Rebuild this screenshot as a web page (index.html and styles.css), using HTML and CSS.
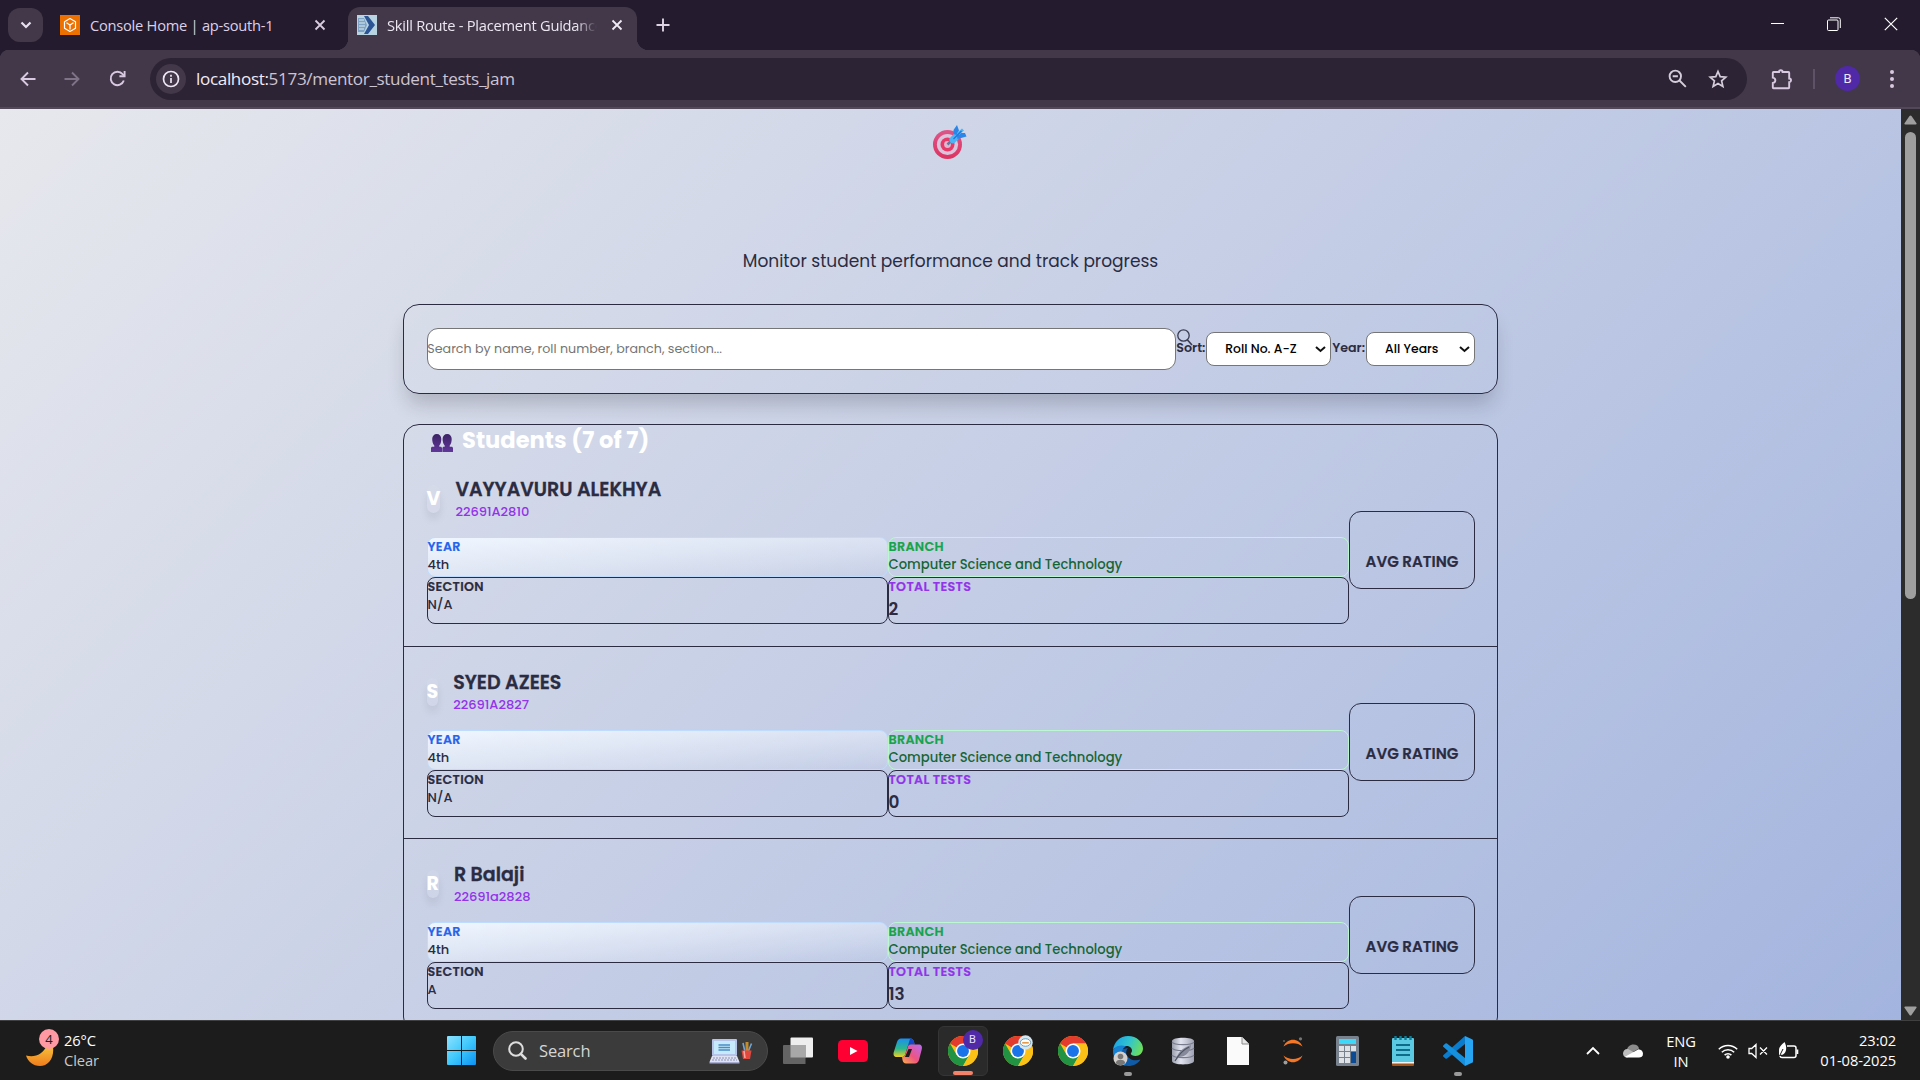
FILE: index.html
```html
<!DOCTYPE html>
<html lang="en">
<head>
<meta charset="utf-8">
<title>Skill Route - Placement Guidance</title>
<link rel="stylesheet" href="styles.css">
</head>
<body>
<svg class="defs" width="0" height="0" aria-hidden="true">
  <defs>
    <symbol id="chrome" viewBox="0 0 48 48">
      <circle cx="24" cy="24" r="24" fill="#fbc116"/>
      <path d="M24 24 3.2 12A24 24 0 0 1 44.8 12H24z" fill="#e33b2e"/>
      <path d="M3.2 12A24 24 0 0 0 24 48L34.4 30 24 24 13.6 30z" fill="#229342"/>
      <path d="M24 12H44.8A24 24 0 0 1 24 48L34.4 30z" fill="#fbc116"/>
      <circle cx="24" cy="24" r="12" fill="#fff"/>
      <circle cx="24" cy="24" r="9.5" fill="#1a73e8"/>
    </symbol>
  </defs>
</svg>

<div class="tabstrip">
  <div class="tab-search"><svg width="12" height="8" viewBox="0 0 12 8"><path d="M1.5 1.5 6 6l4.500-4.500" fill="none" stroke="#e8e0ee" stroke-width="2.200"/></svg></div>
  <div class="tab tab-idle">
    <svg width="20" height="20" viewBox="0 0 20 20"><rect width="20" height="20" fill="#ed7100"/><g fill="none" stroke="#fff" stroke-width="1.200" stroke-linejoin="round"><path d="M10 3.500 15.500 6.700V13.300L10 16.500 4.500 13.300V6.700z"/><path d="M6.500 7.700 10 10l3.500-2.300M10 10v4.500"/></g></svg>
    <span class="tab-title">Console Home | ap-south-1</span>
    <svg class="tab-x" width="12" height="12" viewBox="0 0 12 12"><path d="M1.500 1.500l9 9M10.500 1.500l-9 9" stroke="#d8cce0" stroke-width="1.800"/></svg>
  </div>
  <div class="tab tab-active">
    <svg width="20" height="20" viewBox="0 0 20 20"><rect width="20" height="20" fill="#b8d4e2"/><path d="M1 3h6l3 7-3 7H1z" fill="#7fa3c4"/><path d="M2 5h5M2 8h6M2 11h6M2 14h5" stroke="#dcebf2" stroke-width="1"/><path d="M7 1h4l7 9-7 9H7l5-9z" fill="#2c5596"/></svg>
    <span class="tab-title tab-fade">Skill Route - Placement Guidance</span>
    <svg class="tab-x" width="12" height="12" viewBox="0 0 12 12"><path d="M1.500 1.500l9 9M10.500 1.500l-9 9" stroke="#f0eaf4" stroke-width="1.800"/></svg>
  </div>
  <svg class="new-tab" width="14" height="14" viewBox="0 0 14 14"><path d="M7 .5v13M.5 7h13" stroke="#ddd3e4" stroke-width="1.900"/></svg>
  <div class="window-buttons">
    <svg width="13" height="14" viewBox="0 0 13 14"><path d="M0 6.500h13" stroke="#fff"/></svg>
    <svg width="14" height="14" viewBox="0 0 14 14" fill="none" stroke="#fff"><rect x=".5" y="3" width="10.500" height="10.500" rx="1"/><path d="M3 .8h8.500a1.800 1.800 0 0 1 1.800 1.800V11"/></svg>
    <svg width="14" height="14" viewBox="0 0 14 14"><path d="M.8.8l12.400 12.400M13.200.8.8 13.200" stroke="#fff" stroke-width="1.200"/></svg>
  </div>
</div>

<div class="toolbar">
  <svg class="nav-back" width="16" height="16" viewBox="0 0 16 16" fill="none" stroke="#d9c9e0" stroke-width="1.900"><path d="M15.500 8H2M8 1.500 1.500 8 8 14.500"/></svg>
  <svg class="nav-forward" width="16" height="16" viewBox="0 0 16 16" fill="none" stroke="#7f7388" stroke-width="1.900"><path d="M.5 8H14M8 1.500 14.500 8 8 14.500"/></svg>
  <svg class="nav-reload" width="17" height="17" viewBox="0 0 17 17" fill="none" stroke="#d9c9e0" stroke-width="1.900"><path d="M14.800 10.500a6.700 6.700 0 1 1-1.200-6.300L15 5.700"/><path d="M15.600 1v5.200h-5.200"/></svg>
  <div class="omnibox">
    <div class="site-info"><svg width="18" height="18" viewBox="0 0 18 18"><circle cx="9" cy="9" r="7.500" fill="none" stroke="#eee6f2" stroke-width="1.700"/><path d="M9 8v5M9 4.800v1.900" stroke="#eee6f2" stroke-width="1.700"/></svg></div>
    <span class="url"><b>localhost:</b>5173/mentor_student_tests_jam</span>
    <svg class="omni-zoom" width="19" height="19" viewBox="0 0 19 19" fill="none" stroke="#d6cdda" stroke-width="1.900"><circle cx="7.300" cy="7.300" r="5.700"/><path d="M11.500 11.500l6.300 6.300M4.700 7.300h5.200"/></svg>
    <svg class="omni-star" width="20" height="20" viewBox="0 0 20 20"><path d="M10 2.500l2.200 5.200 5.600.5-4.200 3.700 1.300 5.500L10 14.500l-4.900 2.900 1.300-5.500L2.200 8.200l5.600-.5z" fill="none" stroke="#d6cdda" stroke-width="1.700"/></svg>
  </div>
  <svg class="puzzle" width="22" height="22" viewBox="0 0 22 22"><path d="M2.500 4H8a1.800 1.800 0 0 1 3.600 0H17.500a.7.700 0 0 1 .7.700V10.500a1.800 1.800 0 0 1 0 3.600V19.500a.7.700 0 0 1-.7.700H2.500a.7.700 0 0 1-.7-.7V15c3.400-.6 3.400-4.800 0-5.400V4.700a.7.700 0 0 1 .7-.7z" fill="none" stroke="#d9c9e0" stroke-width="1.900"/></svg>
  <span class="toolbar-rule"></span>
  <span class="profile">B</span>
  <svg class="kebab" width="4" height="18" viewBox="0 0 4 18" fill="#d9c9e0"><circle cx="2" cy="2" r="2"/><circle cx="2" cy="9" r="2"/><circle cx="2" cy="16" r="2"/></svg>
</div>

<div class="viewport">
  <main class="page">
    <svg class="target" width="34" height="34" viewBox="0 0 34 34">
      <defs><linearGradient id="tg" x1="0" y1="0" x2="0" y2="1"><stop offset="0" stop-color="#dc5689"/><stop offset="1" stop-color="#de3360"/></linearGradient></defs>
      <circle cx="14.500" cy="19.500" r="14.500" fill="url(#tg)"/><circle cx="14.500" cy="19.500" r="10.600" fill="#d9c6dc"/><circle cx="14.500" cy="19.500" r="7" fill="#e83a69"/><circle cx="14.500" cy="19.500" r="3.400" fill="#dcb9d0"/>
      <path d="M14.500 19.500 19 15" stroke="#68779b" stroke-width="2.500"/>
      <path d="M16.500 13.500 23 6.500l5 5-6.500 6.500c-3 1.500-6-1.500-5-4.500z" fill="#4db3f5"/>
      <path d="M20.500 9 20.500 5 24 0 26 5.500 23.500 10zM24.500 14 33.500 11.500 32 8 27.500 8 24 11z" fill="#2c86e8"/>
      <path d="M25 9l5-4.500" stroke="#4db3f5" stroke-width="3"/><path d="M20.500 14l8-8" stroke="#2474d6" stroke-width="1.200"/>
    </svg>
    <p class="subtitle">Monitor student performance and track progress</p>

    <section class="filters">
      <input class="search" type="text" placeholder="Search by name, roll number, branch, section...">
      <label class="filter-label sort-label">Sort:
        <svg class="lens" width="16" height="17" viewBox="0 0 16 17" fill="none" stroke="#3b3c52" stroke-width="1.300"><circle cx="6.500" cy="6.500" r="5.700"/><path d="M10.300 10.800l4.700 5.200" stroke-width="1.700"/></svg>
      </label>
      <div class="select select-sort">Roll No. A-Z<svg width="11" height="7" viewBox="0 0 11 7"><path d="M1 1l4.500 4L10 1" fill="none" stroke="#111" stroke-width="2"/></svg></div>
      <label class="filter-label year-label">Year:</label>
      <div class="select select-year">All Years<svg width="11" height="7" viewBox="0 0 11 7"><path d="M1 1l4.500 4L10 1" fill="none" stroke="#111" stroke-width="2"/></svg></div>
    </section>

    <section class="students">
      <h2 class="students-title">
        <svg class="people" width="22" height="18" viewBox="0 0 22 18"><defs><linearGradient id="pg" x1="0" y1="0" x2="0" y2="1"><stop offset="0" stop-color="#3c2265"/><stop offset="1" stop-color="#60389a"/></linearGradient></defs><g fill="url(#pg)"><path d="M5.800 0C8.500 0 10.300 2 10.300 5c0 2.500-.6 5-2 6.500v1.300h1.200c.9 0 1.500.6 1.500 1.500V18H0v-3.700c0-.9.600-1.500 1.500-1.500h1.800v-1.300C1.900 10 1.200 7.500 1.200 5c0-3 1.900-5 4.600-5z"/><path d="M16.200 0c2.700 0 4.500 2 4.500 5 0 2.500-.6 5-2 6.500v1.300h1.800c.9 0 1.500.6 1.500 1.500V18H11.400v-3.700c0-.9.600-1.500 1.500-1.500h.8v-1.300c-1.400-1.500-2.100-4-2.100-6.500 0-3 1.900-5 4.600-5z"/></g></svg>
        Students (7 of 7)
      </h2>

      <article class="student">
        <div class="student-main">
          <header class="student-head"><span class="avatar">V</span><div><h3>VAYYAVURU ALEKHYA</h3><p class="roll">22691A2810</p></div></header>
          <dl class="facts">
            <div class="fact fact-year"><dt>YEAR</dt><dd>4th</dd></div>
            <div class="fact fact-branch"><dt>BRANCH</dt><dd>Computer Science and Technology</dd></div>
            <div class="fact"><dt>SECTION</dt><dd>N/A</dd></div>
            <div class="fact fact-tests"><dt>TOTAL TESTS</dt><dd>2</dd></div>
          </dl>
        </div>
        <div class="rating">AVG RATING</div>
      </article>

      <article class="student">
        <div class="student-main">
          <header class="student-head"><span class="avatar">S</span><div><h3>SYED AZEES</h3><p class="roll">22691A2827</p></div></header>
          <dl class="facts">
            <div class="fact fact-year"><dt>YEAR</dt><dd>4th</dd></div>
            <div class="fact fact-branch"><dt>BRANCH</dt><dd>Computer Science and Technology</dd></div>
            <div class="fact"><dt>SECTION</dt><dd>N/A</dd></div>
            <div class="fact fact-tests"><dt>TOTAL TESTS</dt><dd>0</dd></div>
          </dl>
        </div>
        <div class="rating">AVG RATING</div>
      </article>

      <article class="student">
        <div class="student-main">
          <header class="student-head"><span class="avatar">R</span><div><h3>R Balaji</h3><p class="roll">22691a2828</p></div></header>
          <dl class="facts">
            <div class="fact fact-year"><dt>YEAR</dt><dd>4th</dd></div>
            <div class="fact fact-branch"><dt>BRANCH</dt><dd>Computer Science and Technology</dd></div>
            <div class="fact"><dt>SECTION</dt><dd>A</dd></div>
            <div class="fact fact-tests"><dt>TOTAL TESTS</dt><dd>13</dd></div>
          </dl>
        </div>
        <div class="rating">AVG RATING</div>
      </article>
    </section>
  </main>
  <div class="scrollbar">
    <svg width="13" height="10" viewBox="0 0 13 10"><path d="M5.500 1a1.300 1.300 0 0 1 2 0l5 7.300c.3.700 0 1.200-.8 1.200H1.300C.5 9.500.2 9 .5 8.300z" fill="#9f9f9f"/></svg>
    <span class="thumb"></span>
    <svg class="down" width="13" height="10" viewBox="0 0 13 10"><path d="M5.500 9a1.300 1.300 0 0 0 2 0l5-7.300C12.800 1 12.500.5 11.700.5H1.300C.5.5.2 1 .5 1.700z" fill="#9f9f9f"/></svg>
  </div>
</div>

<footer class="taskbar">
  <div class="weather">
    <div class="moon">
      <svg width="28" height="21" viewBox="0 0 28 21"><defs><linearGradient id="mg" x1="0" y1="0" x2="0" y2="1"><stop offset="0" stop-color="#f5c23c"/><stop offset="1" stop-color="#f07c1c"/></linearGradient></defs><path d="M0 9.500c9 2.500 17-1.500 20.500-9.500 3 2 6.500 1 6.500 1 1.500 11-5 19-13 19C7 20 2 15.500 0 9.500z" fill="url(#mg)"/></svg>
      <span class="count">4</span>
    </div>
    <div class="two-lines"><span>26°C</span><span class="dim">Clear</span></div>
  </div>
  <div class="start"><svg width="29" height="29" viewBox="0 0 29 29"><defs><linearGradient id="wg" x1="0" y1="0" x2="1" y2="1"><stop offset="0" stop-color="#8be3ff"/><stop offset=".5" stop-color="#3fc8fb"/><stop offset="1" stop-color="#0a92f5"/></linearGradient></defs><path d="M1 0h13v14H0V1a1 1 0 0 1 1-1zM15 0h13a1 1 0 0 1 1 1v13H15zM0 15h14v14H1a1 1 0 0 1-1-1zM15 15h14v13a1 1 0 0 1-1 1H15z" fill="url(#wg)"/></svg></div>
  <div class="task-search">
    <svg width="19" height="19" viewBox="0 0 19 19" fill="none" stroke="#dedede" stroke-width="2"><circle cx="8" cy="8" r="6.800"/><path d="M12.800 12.800l4.700 4.700" stroke-width="2.600" stroke-linecap="round"/></svg>
    <span>Search</span>
    <svg class="doodle" width="44" height="26" viewBox="0 0 44 26">
      <rect x="3" y="1" width="25" height="17" rx="1" fill="#b6c4ea"/><rect x="5" y="3" width="21" height="13" fill="#c6eafc"/><path d="M9.500 7h11.500M9.500 9.500h11.500M9.500 12h11.500" stroke="#4a8cc4" stroke-width="1.500"/><path d="M3 18h25l2.500 6H.5z" fill="#dfe2f3"/><path d="M4 20h23M3 22h25" stroke="#8d93b8" stroke-dasharray="2 1"/><path d="M.5 24h30v1.500H.5z" fill="#a9aed0"/>
      <path d="M34 5l2 9M42.500 5.500 39 14" stroke="#6fa6d8" stroke-width="1.600"/><path d="M38 4v9" stroke="#c18d2e" stroke-width="3"/><path d="M32.500 12.500h10L41 21h-7z" fill="#e2483e"/><path d="M35 13l1 7" stroke="#ffa79d" stroke-width="1.500"/>
    </svg>
  </div>
  <div class="apps">
    <div class="app"><svg width="30" height="28" viewBox="0 0 30 28"><rect x="7.500" y=".5" width="22.500" height="20" rx="1" fill="#eee"/><path d="M1 8h21.500v19H1a1 1 0 0 1-1-1V9a1 1 0 0 1 1-1z" fill="#646464"/><path d="M7.500 8h15v12.500h-15z" fill="#a8a8a8"/></svg></div>
    <div class="app"><svg width="30" height="22" viewBox="0 0 30 22"><rect width="30" height="22" rx="4.500" fill="#ff0033"/><path d="M12 7l7.500 4L12 15z" fill="#fff"/></svg></div>
    <div class="app"><svg width="30" height="28" viewBox="0 0 30 28"><defs><linearGradient id="c1" x1="0" y1="0" x2="0" y2="1"><stop offset="0" stop-color="#1b8ff0"/><stop offset=".55" stop-color="#2cb88c"/><stop offset="1" stop-color="#f3d021"/></linearGradient><linearGradient id="c2" x1="0" y1="1" x2="1" y2="0"><stop offset="0" stop-color="#f8b14c"/><stop offset=".45" stop-color="#ee5480"/><stop offset="1" stop-color="#b76bf5"/></linearGradient></defs><path d="M8 1.500h9.500c2 0 3 1.500 3.500 3.500l.7 2.500H18c-2 0-3 1-3.500 2.500l-2.300 7.500c-.5 1.500-1.500 2.500-3 2.500H4c-3 0-4-2-3.200-5L4 5c.8-2.300 2-3.500 4-3.500z" fill="url(#c1)"/><path d="M15 1.500h2.500c2 0 3 1.500 3.500 3.500l.7 2.500H18c-2 0-3 1-3.500 2.500L17 2z" fill="#1447c9"/><path d="M22 26.500h-9c-2 0-3-1.500-3.500-3.500L9 20c2 0 2.800-1 3.200-2.500l2.500-7.500c.5-1.500 1.500-2.500 3.300-2.500h7.500c3 0 4 2 3.200 5L26 23c-.8 2.300-2 3.500-4 3.500z" fill="url(#c2)"/><path d="M15.500 12h3.500l-3 8h-4z" fill="#1c1c1c"/></svg></div>
    <div class="app app-current"><svg width="30" height="30"><use href="#chrome"/></svg><span class="badge badge-profile">B</span><i class="run run-current"></i></div>
    <div class="app"><svg width="30" height="30"><use href="#chrome"/></svg><svg class="badge badge-aws" viewBox="0 0 16 16"><circle cx="8" cy="8" r="7.700" fill="#d8e5ec"/><ellipse cx="8" cy="8" rx="5.500" ry="4" fill="#fff" stroke="#5b9fbd"/><path d="M4.500 8.300h7" stroke="#e39a4c" stroke-width="1.800"/></svg></div>
    <div class="app"><svg width="30" height="30"><use href="#chrome"/></svg></div>
    <div class="app"><svg width="30" height="30" viewBox="0 0 30 30"><defs><linearGradient id="e1" x1="0" y1=".3" x2="1" y2=".6"><stop offset="0" stop-color="#1aa3e4"/><stop offset=".5" stop-color="#32c4cf"/><stop offset="1" stop-color="#6fdf55"/></linearGradient></defs><path d="M0 15A15 15 0 0 0 15 30c6 0 10-2.500 12.500-6.500-4 1.500-9 1-12-2C12 18.500 13 14 15 12z" fill="#0f5ba8"/><path d="M0 14C1 6 7 0 15 0c9 0 15 6.500 15 12.500 0 4.500-3.500 7.500-7.500 7.500-2.500 0-4.700-1-4.700-2.200 0-1 1.200-1.300 1.200-3.300 0-2.500-2.500-4.500-5.500-4.500C7 9.500 2 11 0 14z" fill="url(#e1)"/><path d="M0 14C3 9.500 9 8.500 13 10.500 9 12 8 17 9.500 21l3 8.500C5 28.500 0 22 0 14z" fill="#1680d2"/><circle cx="7.500" cy="22.500" r="7" fill="#d2cfcc"/><circle cx="7.500" cy="20.500" r="2.800" fill="#777"/><path d="M2.800 27c0-4.500 9.400-4.500 9.400 0-2 3-7.400 3-9.400 0z" fill="#777"/></svg><i class="run"></i></div>
    <div class="app"><svg width="24" height="28" viewBox="0 0 24 28"><defs><linearGradient id="db" x1="0" y1="0" x2="1" y2="0"><stop offset="0" stop-color="#9a9dab"/><stop offset=".4" stop-color="#e2e4f0"/><stop offset="1" stop-color="#9fa2b2"/></linearGradient></defs><path d="M1 4c0-4.500 22-4.500 22 0v20c0 4.500-22 4.500-22 0z" fill="url(#db)"/><path d="M1 5c2 3.500 20 3.500 22 0M1 11c2 3.500 20 3.500 22 0M1 18c2 3.500 20 3.500 22 0" fill="none" stroke="#777b8b" stroke-width="1.200"/><path d="M5 23c1-7 6-12 15-15-1 8-6 12-12 12z" fill="#85899a"/><path d="M4 24C8 17 12 13 18 10" fill="none" stroke="#4e5260" stroke-width="1.200"/></svg></div>
    <div class="app"><svg width="22" height="28" viewBox="0 0 22 28"><path d="M0 0h15l7 7v21H0z" fill="#fafafa"/><path d="M15 0v7h7" fill="#e6e6e6" stroke="#8a8a8a"/></svg></div>
    <div class="app"><svg width="22" height="28" viewBox="0 0 22 28"><path d="M1.500 9.500c3.500-9 15.500-9 19 0-5-4.500-14-4.500-19 0zM1.500 18.500c3.500 9 15.500 9 19 0-5 4.500-14 4.500-19 0z" fill="#f37726"/><circle cx="18.500" cy="1.800" r="1.600" fill="#767677"/><circle cx="2" cy="4" r="1" fill="#616262"/><circle cx="3.500" cy="25.500" r="2" fill="#9e9e9e"/></svg></div>
    <div class="app"><svg width="23" height="30" viewBox="0 0 23 30"><rect width="23" height="30" rx="1.500" fill="#77828e"/><rect x="3" y="3" width="17" height="5" fill="#40d8f8"/><g fill="#dfe3e8"><path d="M3 10h5v5H3zM9 10h5v5H9zM15 10h5v5h-5zM3 16h5v5H3zM9 16h5v5H9zM3 22h5v5H3zM9 22h5v5H9z"/></g><path d="M15 16h5v11h-5z" fill="#0d4a94"/></svg></div>
    <div class="app"><svg width="22" height="30" viewBox="0 0 22 30"><path d="M0 26h22v3a1 1 0 0 1-1 1H1a1 1 0 0 1-1-1z" fill="#a3541a"/><path d="M0 25h22v2.500H0z" fill="#f2f2f2"/><path d="M0 3a1 1 0 0 1 1-1h20a1 1 0 0 1 1 1v23H0z" fill="#5cc9e2"/><path d="M4 9h14M4 14h14M4 19h14" stroke="#0f6b8a" stroke-width="2"/><path d="M3.500 0v4M8.500 0v4M13.500 0v4M18.500 0v4" stroke="#0f7c98" stroke-width="2.400"/></svg></div>
    <div class="app"><svg width="30" height="30" viewBox="0 0 30 30"><path d="M22 0l7 3.200a1.500 1.500 0 0 1 1 1.400v20.800a1.500 1.500 0 0 1-1 1.400L22 30z" fill="#27a5f2"/><path d="M22 0v8L4 22.500a1.200 1.200 0 0 1-1.600 0L.5 20.800a1.200 1.200 0 0 1 0-1.800z" fill="#0a7ccb"/><path d="M22 30v-8L4 7.500a1.200 1.200 0 0 0-1.600 0L.5 9.200a1.200 1.200 0 0 0 0 1.800z" fill="#1490df"/></svg><i class="run"></i></div>
  </div>
  <div class="tray">
    <svg class="tray-up" width="14" height="9" viewBox="0 0 14 9"><path d="M1 8l6-6 6 6" fill="none" stroke="#fff" stroke-width="1.800"/></svg>
    <svg class="tray-cloud" width="20" height="14" viewBox="0 0 20 14"><path d="M4 6c0-3 3-5.500 6.500-5.500 3 0 5 1.500 5.500 4L10 8z" fill="#8c8c8c"/><path d="M0 9.500C0 6.500 2.500 4.500 5 5l9 5-10 3.500C2 13.500 0 12 0 9.500z" fill="#bdbdbd"/><path d="M2 12.800 15.500 5.200C18 5.500 20 7 20 9.700S18 13.500 16 13.500H4c-.8 0-1.500-.3-2-.7z" fill="#fff"/></svg>
    <div class="two-lines lang"><span>ENG</span><span>IN</span></div>
    <svg class="tray-wifi" width="20" height="16" viewBox="0 0 20 16" fill="none" stroke="#fff" stroke-width="1.500"><path d="M.8 6.200a13 13 0 0 1 18.400 0M3.800 9.300a8.800 8.800 0 0 1 12.400 0M6.600 12.100a4.800 4.800 0 0 1 6.800 0"/><circle cx="10" cy="14" r="1.800" fill="#fff" stroke="none"/></svg>
    <svg class="tray-sound" width="20" height="16" viewBox="0 0 20 16" fill="none" stroke="#fff" stroke-width="1.300"><path d="M1 5.500h2.700L8 1.500v13l-4.300-4H1zM12 4.500l7 7M19 4.500l-7 7"/></svg>
    <svg class="tray-battery" width="21" height="17" viewBox="0 0 21 17"><path d="M9 4h7a2 2 0 0 1 2 2v7.500a2 2 0 0 1-2 2H4a2 2 0 0 1-2-1.500" fill="none" stroke="#fff" stroke-width="1.500"/><path d="M18.500 7.500h1.800v4.500h-1.800zM1 8.500C1 4.500 4 2.500 6.500 0c2.500 4.500 2.500 10-1.500 12.500-1 .5-2 .3-2.500 0L1 14.500" fill="#fff"/><path d="M1.500 14 5 7" stroke="#1c1c1c"/></svg>
    <div class="two-lines clock"><span>23:02</span><span>01-08-2025</span></div>
  </div>
</footer>
</body>
</html>
```
FILE: styles.css
```css
* { box-sizing: border-box; margin: 0; padding: 0; }
svg { display: block; flex: none; }
body {
  width: 1920px;
  height: 1080px;
  overflow: hidden;
  display: flex;
  flex-direction: column;
  background: #1c1c1c;
  font-family: "Open Sans", "Noto Sans", sans-serif;
}
.defs { position: absolute; }

/* Tab strip */
.tabstrip { height: 50px; flex: none; display: flex; align-items: flex-start; padding-left: 8px; background: #241c2e; }
.tab-search { width: 35px; height: 34px; margin-top: 8px; border-radius: 12px; background: #42384a; display: flex; align-items: center; justify-content: center; }
.tab { display: flex; align-items: center; font-size: 14.670px; letter-spacing: -0.250px; color: #ddd0e6; white-space: nowrap; }
.tab-title { margin-left: 10px; overflow: hidden; }
.tab-x { margin-left: auto; }
.tab-idle { width: 266px; height: 34px; margin: 8px 22px 0 17px; }
.tab-active { position: relative; width: 289px; height: 43px; margin-top: 7px; padding: 0 14px 7px 9px; border-radius: 12px 12px 0 0; background: #42384a; color: #ece6f0; }
.tab-active::before, .tab-active::after { content: ""; position: absolute; bottom: 0; width: 12px; height: 12px; }
.tab-active::before { left: -12px; background: radial-gradient(circle at 0 0, transparent 12px, #42384a 12.500px); }
.tab-active::after { right: -12px; background: radial-gradient(circle at 100% 0, transparent 12px, #42384a 12.500px); }
.tab-fade { width: 210px; -webkit-mask-image: linear-gradient(90deg, #000 90%, transparent); mask-image: linear-gradient(90deg, #000 90%, transparent); }
.new-tab { margin: 18px 0 0 19px; }
.window-buttons { margin: 17px 22px 0 auto; display: flex; gap: 43px; }

/* Toolbar */
.toolbar {
  height: 59px;
  flex: none;
  display: flex;
  align-items: center;
  padding-left: 20px;
  border-bottom: 2px solid #52485a;
  background:
    radial-gradient(circle at 9px 9px, #42384a 9px, #241c2e 9.500px) 0 0 / 9px 9px no-repeat,
    radial-gradient(circle at 0 9px, #42384a 9px, #241c2e 9.500px) 100% 0 / 9px 9px no-repeat,
    #42384a;
}
.nav-forward { margin-left: 28px; }
.nav-reload { margin-left: 29px; }
.omnibox { width: 1597px; height: 42px; margin-left: 24px; border-radius: 21px; background: #2c2334; display: flex; align-items: center; padding: 0 19px 0 6px; }
.site-info { width: 30px; height: 30px; border-radius: 50%; background: #42384a; display: flex; align-items: center; justify-content: center; }
.url { margin-left: 10px; font-size: 17.100px; letter-spacing: -0.350px; color: #cdc4d3; }
.url b { font-weight: 400; color: #f1ebf5; }
.omni-zoom { margin-left: auto; }
.omni-star { margin-left: 21px; }
.puzzle { margin-left: 24px; }
.toolbar-rule { width: 2px; height: 20px; margin-left: 20px; background: #5d5266; }
.profile { width: 25px; height: 25px; margin-left: 20px; border-radius: 50%; background: #5029a8; color: #eee6fa; font: 13px/25px Roboto, sans-serif; text-align: center; }
.kebab { margin-left: 30px; }

/* Web page */
.viewport { height: 911px; flex: none; display: flex; }
.page {
  width: 1901px;
  overflow: hidden;
  padding-top: 16px;
  display: flex;
  flex-direction: column;
  align-items: center;
  background: linear-gradient(135deg, #e7e8ed, #a3b4de);
  font-family: Poppins, Inter, sans-serif;
  color: #2b2c42;
}
.target { flex: none; margin-right: 1px; }
.subtitle { margin-top: 89px; font-size: 17px; line-height: 26px; }
.filters {
  flex: none;
  width: 1095px;
  height: 90px;
  margin-top: 30px;
  padding: 23px 22px 23px 23px;
  border: 1px solid #2b2c42;
  border-radius: 16px;
  display: flex;
  align-items: center;
  box-shadow: 0 14px 20px -4px rgba(20, 20, 30, 0.200);
}
.search { width: 750px; height: 42px; border: 1px solid #767676; border-radius: 11px; background: #fff; font: 12.670px Poppins, Inter, sans-serif; text-indent: -0.700px; outline: none; }
.search::placeholder { color: #757575; }
.filter-label { font-size: 12.670px; font-weight: 600; line-height: 20px; position: relative; top: -1px; white-space: nowrap; }
.sort-label { width: 30px; }
.year-label { width: 35px; padding-left: 1px; }
.lens { position: absolute; left: 1px; top: -9px; }
.select { height: 34px; border: 1px solid #767676; border-radius: 8px; background: #fff; color: #000; font-size: 12.400px; font-weight: 500; display: flex; align-items: center; justify-content: space-between; padding: 0 4px 0 18px; white-space: nowrap; }
.select-sort { width: 125px; }
.select-year { width: 109px; }

.students { flex: none; width: 1095px; margin-top: 30px; border: 1px solid #2b2c42; border-radius: 16px; }
.students-title { height: 29px; padding-left: 27px; display: flex; align-items: center; gap: 9px; font-size: 22.600px; line-height: 30px; font-weight: 700; color: #fff; }
.people { margin-top: 7px; }
.student { height: 192.670px; padding: 0 22px 0 23px; border-bottom: 1px solid #2b2c42; display: flex; align-items: center; }
.student-main { width: 922px; flex: none; align-self: stretch; padding-top: 23px; }
.student-head { height: 60px; display: flex; gap: 15px; }
.student-head h3 { position: relative; top: 1px; font-size: 19px; line-height: 24px; font-weight: 600; -webkit-text-stroke: 0.300px; }
.avatar { height: 28px; margin: 8px 0 0 -0.500px; border-radius: 8px; background: rgba(225, 226, 240, 0.200); color: #fff; font-size: 19px; line-height: 28px; font-weight: 700; box-shadow: 0 7px 10px -2px rgba(20, 20, 40, 0.130); }
.roll { margin-top: 1px; font-size: 13px; line-height: 19px; font-weight: 500; color: #9333ea; }
.facts { display: grid; grid-template-columns: 461px 461px; grid-template-rows: 40px 47px; }
.fact { border: 1px solid #2b2c42; border-radius: 8px; font-size: 13px; font-weight: 500; line-height: 20.500px; text-indent: -0.500px; }
.fact dt { font-size: 12.670px; font-weight: 600; line-height: 17px; letter-spacing: 0.320px; -webkit-text-stroke: 0.200px; }
.fact-year { border-color: #bfdbfe; background: linear-gradient(to bottom right, #eff6ff, rgba(239, 246, 255, 0)); }
.fact-year dt { color: #2563eb; }
.fact-branch { border-color: #bbf7d0; }
.fact-branch dt { color: #16a34a; }
.fact-branch dd { color: #166534; font-size: 13.170px; }
.fact-tests dt { color: #9333ea; }
.fact-tests dd { font-size: 16.900px; line-height: 28px; font-weight: 600; }
.rating { width: 127px; height: 78px; padding-top: 39px; border: 1px solid #2b2c42; border-radius: 12px; text-align: center; font-size: 15.100px; line-height: 22px; font-weight: 600; -webkit-text-stroke: 0.200px; }

.scrollbar { width: 19px; background: #2c2c2c; display: flex; flex-direction: column; align-items: center; padding: 6px 0 4px; }
.thumb { width: 11px; height: 467px; margin-top: 7px; border-radius: 6px; background: #9f9f9f; }
.down { margin-top: auto; }

/* Taskbar */
.taskbar { height: 60px; flex: none; border-top: 1px solid #404040; display: flex; align-items: center; background: #1c1c1c; color: #fff; }
.two-lines { display: flex; flex-direction: column; font-size: 14.700px; line-height: 20px; letter-spacing: -0.100px; position: relative; top: -1px; }
.weather { width: 438px; padding-left: 26px; display: flex; align-items: center; gap: 10px; }
.moon { position: relative; height: 40px; padding-top: 15px; }
.count { position: absolute; left: 13px; top: -2px; width: 20px; height: 20px; border-radius: 50%; background: #ff99a4; color: #222; font-size: 13px; line-height: 20px; text-align: center; }
.dim { color: #c8c8c8; }
.start { width: 55px; padding-left: 9px; }
.task-search { width: 275px; height: 40px; border-radius: 20px; background: #3b3b3b; border: 1px solid #4a4a4a; display: flex; align-items: center; padding: 0 14px; color: #d6d6d6; font-size: 16.500px; letter-spacing: -0.150px; }
.task-search span { margin-left: 12px; }
.doodle { margin-left: auto; }
.apps { display: flex; padding-left: 2px; }
.app { position: relative; width: 50px; height: 50px; margin: 0 2.500px; border-radius: 6px; display: flex; align-items: center; justify-content: center; }
.app-current { background: #2a2a2a; border: 1px solid #353535; }
.badge { position: absolute; }
.badge-profile { left: 24px; top: 3px; width: 20px; height: 20px; border-radius: 50%; background: #5029a8; color: #e8dffa; font: 11px/20px Roboto, sans-serif; text-align: center; }
.badge-aws { left: 25px; top: 9px; width: 15px; height: 15px; }
.run { position: absolute; left: 21px; bottom: 0; width: 8px; height: 4px; border-radius: 2px; background: #9a9a9a; }
.run-current { left: 14px; width: 20px; background: #f4826a; }
.tray { margin-left: auto; padding-right: 24px; display: flex; align-items: center; }
.tray-cloud { margin-left: 23px; }
.lang { margin-left: 23px; width: 30px; align-items: center; top: 0; }
.tray-wifi { margin-left: 22px; }
.tray-sound { margin-left: 10px; }
.tray-battery { margin-left: 10px; }
.clock { margin-left: 19px; width: 78px; align-items: flex-end; }
```
